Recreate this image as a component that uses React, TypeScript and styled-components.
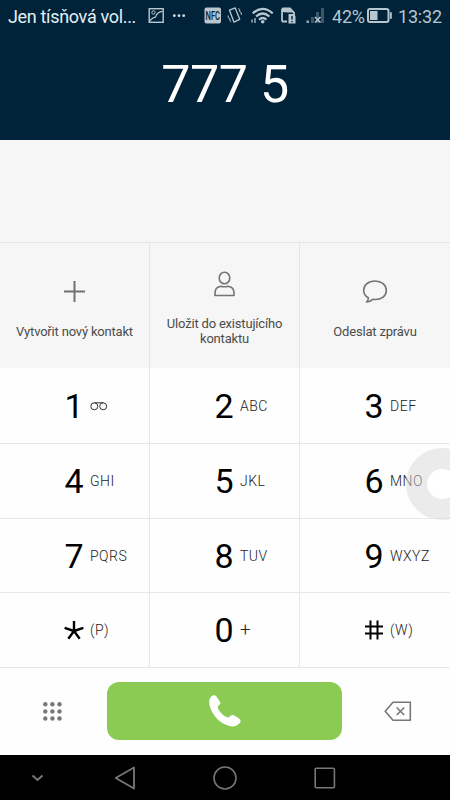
import type { ReactNode } from "react";
import styled, { createGlobalStyle } from "styled-components";

const GlobalStyle = createGlobalStyle`
  * {
    box-sizing: border-box;
  }

  body {
    margin: 0;
    font-family: Roboto, "Noto Sans", sans-serif;
  }

  button {
    padding: 0;
    border: 0;
    background: none;
    color: inherit;
    font: inherit;
  }

  svg {
    display: block;
    flex-shrink: 0;
  }
`;

const Screen = styled.div`
  position: relative;
  display: flex;
  flex-direction: column;
  width: 450px;
  height: 800px;
  overflow: hidden;
  background: #fefefe;
`;

const Header = styled.header`
  height: 140px;
  background: #012339;
`;

const StatusBar = styled.div`
  display: flex;
  align-items: center;
  height: 32px;
  padding-left: 8px;
  color: #b8c6ce;
`;

const Carrier = styled.span`
  width: 140px;
  color: #e2f0f6;
  font-size: 18px;
  letter-spacing: -0.33px;
  white-space: nowrap;
`;

const StatusText = styled.span<{ $width: number }>`
  width: ${(props) => props.$width}px;
  font-size: 18px;
  letter-spacing: -0.2px;
  white-space: nowrap;
`;

const DialedNumber = styled.div`
  padding-top: 22px;
  color: #fff;
  font-size: 52px;
  letter-spacing: -0.5px;
  line-height: 62px;
  text-align: center;
`;

const Suggestions = styled.div`
  height: 102px;
  background: #f6f6f6;
`;

const Actions = styled.div`
  display: grid;
  grid-template-columns: repeat(3, 150px);
  height: 126px;
  border-top: 1px solid #e6e6e6;
  background: #f6f6f6;
`;

const Action = styled.button`
  display: flex;
  flex-direction: column;
  align-items: center;
  justify-content: center;
  padding-top: 6px;
  border-right: 1px solid #e4e4e4;
  color: #4c4c4c;
  font-size: 13px;
  letter-spacing: -0.19px;
  line-height: 15px;

  &:last-child {
    border-right: 0;
  }
`;

const ActionLabel = styled.span<{ $gap: number }>`
  width: 130px;
  margin-top: ${(props) => props.$gap}px;
  text-align: center;
`;

const Keypad = styled.div`
  display: grid;
  grid-template-columns: repeat(3, 150px);
  grid-template-rows: 76px 75px 74px 75px;
  height: 300px;
`;

const Key = styled.button`
  display: flex;
  align-items: center;
  padding-left: 64px;
  border-right: 1px solid #e8e8e8;
  border-bottom: 1px solid #e8e8e8;

  &:nth-child(3n) {
    border-right: 0;
  }
`;

const Digit = styled.span`
  display: flex;
  justify-content: center;
  width: 20px;
  margin-right: 6px;
  color: #000;
  font-size: 34px;
  line-height: 40px;
`;

const Letters = styled.span`
  color: #222;
  font-size: 14px;
  font-weight: 300;
  letter-spacing: 0.5px;
  line-height: 16px;
`;

const PlusText = styled.span`
  font-size: 19px;
`;

const CallBar = styled.div`
  display: flex;
  align-items: center;
  height: 87px;
  padding: 0 38px 0 42px;
`;

const CallButton = styled.button`
  display: flex;
  align-items: center;
  justify-content: center;
  width: 235px;
  height: 58px;
  margin: 0 42px 1px 44px;
  border-radius: 12px;
  background: #8bcb54;
`;

const NavBar = styled.nav`
  display: flex;
  align-items: center;
  height: 45px;
  padding-left: 30px;
  background: #000;
`;

const NavButton = styled.button<{ $gap: number }>`
  margin-right: ${(props) => props.$gap}px;
`;

/* floating assistive button, half outside the screen */
const FloatingButton = styled.div`
  position: absolute;
  top: 448px;
  left: 406px;
  width: 72px;
  height: 72px;
  border: 21px solid rgba(215, 215, 215, 0.5);
  border-radius: 50%;
  background: rgba(255, 255, 255, 0.8);
  background-clip: padding-box;
`;

const StatusIcons = () => (
  <svg width="184" height="32" viewBox="148 0 184 32" fill="none" stroke="#b8c6ce">
    <rect x="149.2" y="8.7" width="14" height="13.6" strokeWidth="1.4" />
    <circle cx="153.5" cy="12.5" r="1.7" />
    <path d="M149.5 21.5q2.5-4 6-4.4q1.7-5.2 7.2-5.7" strokeWidth="1.2" />
    <g fill="#d0dce2" stroke="none">
      <circle cx="174.3" cy="15.7" r="1.4" />
      <circle cx="179" cy="15.7" r="1.4" />
      <circle cx="183.7" cy="15.7" r="1.4" />
      <rect x="204.5" y="7.5" width="16.5" height="16" rx="2" fill="#b8c6ce" />
      <text x="205.5" y="20" fill="#012339" fontSize="12.5" fontWeight="500" textLength="14.5" lengthAdjust="spacingAndGlyphs">
        NFC
      </text>
    </g>
    <path d="M229.5 10.2l5.7-2.3l4.5 11.4l-5.7 2.9z" strokeWidth="1.3" strokeLinejoin="round" />
    <path d="M228.2 15.5v2.2l1.6 1v2l1.4 1M238.2 8.5l1.5 1v2.2l1.6 1v2.2" />
    <g strokeWidth="2.2">
      <path d="M252.7 13.3q10-8.8 20 0" />
      <path d="M256 16.5q6.7-6 13.4 0" />
      <path d="M259 19.6q3.7-3.2 7.4 0" />
    </g>
    <circle cx="262.7" cy="21.7" r="1.8" fill="#b8c6ce" stroke="none" />
    <path d="M252 19.5v3M255 18v5" strokeWidth="1.3" />
    <path d="M282 21.5v-12l1-1h7l4 4v4M282 21.5h5" strokeWidth="1.8" />
    <path d="M282 12v-3.5h7l4 4h-5z" fill="#b8c6ce" stroke="none" />
    <path d="M288.5 14h5l2 2v7.5h-7z" fill="#b8c6ce" stroke="none" />
    <path d="M292 16v3.5M292 21v1.3" stroke="#012339" strokeWidth="1.4" />
    <g fill="#3c5768" stroke="none">
      <rect x="306.5" y="20.5" width="2.5" height="2.5" fill="#93a6b1" />
      <rect x="311" y="17" width="3" height="6" />
      <rect x="316" y="12" width="3" height="11" />
      <rect x="321" y="8" width="3" height="15" />
    </g>
    <path d="M315 17l5.5 5.5M320.5 17l-5.5 5.5" strokeWidth="1.5" />
  </svg>
);

const BatteryIcon = () => (
  <svg width="34" height="32" viewBox="0 0 34 32">
    <rect x="4" y="9" width="20.5" height="13" rx="2" fill="none" stroke="#b8c6ce" strokeWidth="2" />
    <rect x="6" y="11" width="7.5" height="9" fill="#b8c6ce" />
    <path d="M26 12.2h1.8v6.6h-1.8z" fill="#b8c6ce" />
  </svg>
);

const PlusIcon = () => (
  <svg width="23" height="24" viewBox="0 0 23 24" fill="none" stroke="#707070" strokeWidth="2">
    <path d="M11.5 2v21M1 12.5h21" />
  </svg>
);

const PersonIcon = () => (
  <svg width="23" height="26" viewBox="0 0 23 26" fill="none" stroke="#747474" strokeWidth="1.6">
    <ellipse cx="11.5" cy="7" rx="5.3" ry="5.8" />
    <path d="M2 24.5v-2.5q0-6 6-6.8q3.5 1.2 7 0q6 .8 6 6.8v2.5z" strokeLinejoin="round" />
  </svg>
);

const MessageIcon = () => (
  <svg width="26" height="24" viewBox="0 0 26 24" fill="none" stroke="#747474" strokeWidth="1.6">
    <path d="M6.3 18.7C3.5 17.2 1.7 14.5 1.7 11.5C1.7 6 6.5 2 13 2S24.3 6 24.3 11.5S19.5 20.5 13 20.5q-1.2 0-2.3-.2q-3 2.8-6.2 2.7q2.2-1.8 1.8-4.3z" strokeLinejoin="round" />
  </svg>
);

const VoicemailIcon = () => (
  <svg width="18" height="14" viewBox="0 0 18 14" fill="none" stroke="#333" strokeWidth="1">
    <circle cx="4.3" cy="7.3" r="3.5" />
    <circle cx="13.2" cy="7.3" r="3.5" />
    <path d="M4.3 3.8h8.9" />
  </svg>
);

const StarIcon = () => (
  <svg width="20" height="20" viewBox="0 0 20 20" stroke="#000" strokeWidth="2.4">
    <path d="M10 11V1M10 11L.6 7.8M10 11l9.4-3.2M10 11L4.3 18.8M10 11l5.7 7.8" />
  </svg>
);

const HashIcon = () => (
  <svg width="18" height="20" viewBox="0 0 18 20" stroke="#000" strokeWidth="2">
    <path d="M5.5 .5v19M12.5 .5v19M0 6.6h18M0 13.4h18" />
  </svg>
);

const DialpadIcon = () => (
  <svg width="21" height="21" viewBox="0 0 21 21" fill="#777">
    {[3.3, 10.4, 17.5].map((y) =>
      [3.3, 10.4, 17.5].map((x) => <circle key={`${x}-${y}`} cx={x} cy={y} r="2.2" />)
    )}
  </svg>
);

const PhoneIcon = () => (
  <svg width="34" height="34" viewBox="0 0 34 34" fill="#fff">
    <path d="M3.5 2.2Q5.8 .6 8 1.9Q8.8 2.6 12.2 8.2Q13 9.6 11.8 10.6L9.8 12.3Q9.3 14.8 12.8 18.8Q17 23.2 20.6 23.5L22.3 21.9Q23.7 20.4 25.2 21.1Q29.5 23.2 31.8 25.2Q33.6 27.4 31.3 29.6Q27.5 33.8 20.5 31.8Q12 29.3 6.3 21.5Q1.2 14 1.2 8Q1.2 4 3.5 2.2Z" />
  </svg>
);

const DeleteIcon = () => (
  <svg width="28" height="21" viewBox="0 0 28 21" fill="none" stroke="#777" strokeWidth="1.6">
    <path d="M9 1.3h17.3v18H9L1.2 10.3z" strokeLinejoin="round" />
    <path d="M12.7 6.5l7.5 7.5M20.2 6.5l-7.5 7.5" />
  </svg>
);

const keys: { id: string; digit: ReactNode; letters: ReactNode }[] = [
  { id: "1", digit: "1", letters: <VoicemailIcon /> },
  { id: "2", digit: "2", letters: "ABC" },
  { id: "3", digit: "3", letters: "DEF" },
  { id: "4", digit: "4", letters: "GHI" },
  { id: "5", digit: "5", letters: "JKL" },
  { id: "6", digit: "6", letters: "MNO" },
  { id: "7", digit: "7", letters: "PQRS" },
  { id: "8", digit: "8", letters: "TUV" },
  { id: "9", digit: "9", letters: "WXYZ" },
  { id: "star", digit: <StarIcon />, letters: "(P)" },
  { id: "0", digit: "0", letters: <PlusText>+</PlusText> },
  { id: "hash", digit: <HashIcon />, letters: "(W)" },
];

export default function App() {
  return (
    <>
      <GlobalStyle />
      <Screen>
        <Header>
          <StatusBar>
            <Carrier>Jen tísňová vol...</Carrier>
            <StatusIcons />
            <StatusText $width={32}>42%</StatusText>
            <BatteryIcon />
            <StatusText $width={52}>13:32</StatusText>
          </StatusBar>
          <DialedNumber>777 5</DialedNumber>
        </Header>
        <Suggestions />
        <Actions>
          <Action>
            <PlusIcon />
            <ActionLabel $gap={21}>Vytvořit nový kontakt</ActionLabel>
          </Action>
          <Action>
            <PersonIcon />
            <ActionLabel $gap={19}>Uložit do existujícího kontaktu</ActionLabel>
          </Action>
          <Action>
            <MessageIcon />
            <ActionLabel $gap={21}>Odeslat zprávu</ActionLabel>
          </Action>
        </Actions>
        <Keypad>
          {keys.map((key) => (
            <Key key={key.id}>
              <Digit>{key.digit}</Digit>
              <Letters>{key.letters}</Letters>
            </Key>
          ))}
        </Keypad>
        <CallBar>
          <DialpadIcon />
          <CallButton>
            <PhoneIcon />
          </CallButton>
          <DeleteIcon />
        </CallBar>
        <NavBar>
          <NavButton $gap={69}>
            <svg width="15" height="12" viewBox="0 0 15 12" fill="none" stroke="#777" strokeWidth="2">
              <path d="M2.5 3.5l5 4.5l5-4.5" />
            </svg>
          </NavButton>
          <NavButton $gap={76}>
            <svg width="22" height="24" viewBox="0 0 22 24" fill="none" stroke="#777" strokeWidth="1.8">
              <path d="M20 1.5v21L1.7 12z" strokeLinejoin="round" />
            </svg>
          </NavButton>
          <NavButton $gap={76}>
            <svg width="26" height="26" viewBox="0 0 26 26" fill="none" stroke="#777" strokeWidth="1.6">
              <circle cx="13" cy="13" r="11" />
            </svg>
          </NavButton>
          <NavButton $gap={0}>
            <svg width="22" height="22" viewBox="0 0 22 22" fill="none" stroke="#777" strokeWidth="1.6">
              <rect x="1.2" y="1.2" width="19.2" height="19.6" rx="1" />
            </svg>
          </NavButton>
        </NavBar>
        <FloatingButton />
      </Screen>
    </>
  );
}
